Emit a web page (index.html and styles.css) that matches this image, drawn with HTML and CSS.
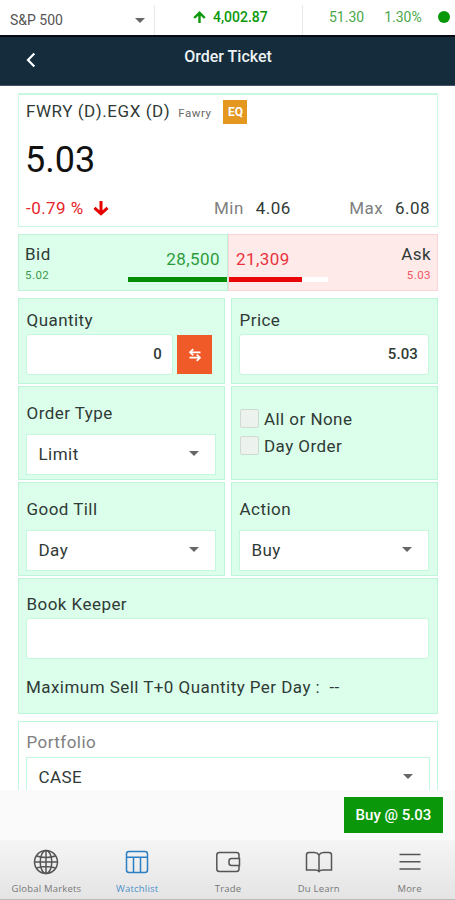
FILE: index.html
```
<!DOCTYPE html>
<html lang="en">
<head>
  <meta charset="UTF-8">
  <meta name="viewport" content="width=device-width, initial-scale=1.0">
  <title>Order Ticket</title>
  <link rel="stylesheet" href="styles.css">
</head>
<body>

  <div class="ticker">
    <div class="ticker-index">
      <span>S&amp;P 500</span>
      <span class="caret"></span>
    </div>
    <div class="ticker-value">
      <svg width="13" height="12" viewBox="0 0 13 12" fill="none" stroke="#0a980a" stroke-width="2.4"><path d="M6.5 12V2M1.2 7l5.3-5.2L11.8 7"/></svg>
      <span>4,002.87</span>
    </div>
    <div class="ticker-change">
      <span>51.30</span>
      <span>1.30%</span>
      <span class="dot"></span>
    </div>
  </div>

  <header>
    <svg class="back" width="10" height="16" viewBox="0 0 10 16" fill="none" stroke="#fff" stroke-width="2.2"><path d="M8.3 1.5L2 8l6.3 6.5"/></svg>
    <h1>Order Ticket</h1>
  </header>

  <main>
    <section class="quote">
      <div class="quote-name">
        <span>FWRY (D).EGX (D)</span>
        <small>Fawry</small>
        <b class="badge">EQ</b>
      </div>
      <div class="quote-price">5.03</div>
      <div class="quote-stats">
        <span class="change">-0.79 %</span>
        <svg width="16" height="15" viewBox="0 0 16 15" fill="none" stroke="#e60000" stroke-width="3"><path d="M8 0v12M1.5 6.8L8 12.8l6.5-6"/></svg>
        <span class="min"><i>Min</i>4.06</span>
        <span class="max"><i>Max</i>6.08</span>
      </div>
    </section>

    <section class="depth">
      <div class="bid">
        <div class="side">Bid<small>5.02</small></div>
        <div class="volume">28,500<div class="bar"></div></div>
      </div>
      <div class="ask">
        <div class="volume">21,309<div class="bar"></div></div>
        <div class="side">Ask<small>5.03</small></div>
      </div>
    </section>

    <div class="form">
      <div class="card card-short">
        <label>Quantity</label>
        <div class="input-row">
          <div class="input">0</div>
          <button class="swap">
            <svg width="14" height="14" viewBox="0 0 14 14" fill="none" stroke="#fff" stroke-width="1.7"><path d="M12.5 4.3H2.5M5.3 1.2L2 4.3l3.3 3.1M1.5 9.7h10M8.7 6.6L12 9.7l-3.3 3.1"/></svg>
          </button>
        </div>
      </div>
      <div class="card card-short">
        <label>Price</label>
        <div class="input">5.03</div>
      </div>

      <div class="card">
        <label>Order Type</label>
        <div class="select"><span>Limit</span><span class="caret"></span></div>
      </div>
      <div class="card checks">
        <div class="check"><span class="box"></span>All or None</div>
        <div class="check"><span class="box"></span>Day Order</div>
      </div>

      <div class="card">
        <label>Good Till</label>
        <div class="select"><span>Day</span><span class="caret"></span></div>
      </div>
      <div class="card">
        <label>Action</label>
        <div class="select"><span>Buy</span><span class="caret"></span></div>
      </div>

      <div class="card keeper">
        <label>Book Keeper</label>
        <div class="input"></div>
        <p>Maximum Sell T+0 Quantity Per Day :&nbsp; --</p>
      </div>
    </div>

    <section class="portfolio">
      <label>Portfolio</label>
      <div class="select"><span>CASE</span><span class="caret"></span></div>
    </section>
  </main>

  <div class="actions">
    <button class="buy-btn">Buy @ 5.03</button>
  </div>

  <nav>
    <a>
      <svg width="26" height="26" viewBox="0 0 26 26"><circle cx="13" cy="13" r="11.5"/><ellipse cx="13" cy="13" rx="5.8" ry="11.5"/><path d="M13 1.5v23M1.5 13h23M3.5 7q9.5 3 19 0M3.5 19q9.5-3 19 0"/></svg>
      Global Markets
    </a>
    <a class="active">
      <svg width="26" height="26" viewBox="0 0 26 26"><rect x="2.5" y="2.5" width="21" height="21" rx="2.5"/><path d="M2.5 8.3h21M9.5 8.3v15M16.5 8.3v15"/></svg>
      Watchlist
    </a>
    <a>
      <svg width="26" height="26" viewBox="0 0 26 26"><path d="M24 9.5V6q0-2.5-2.5-2.5h-17Q1.8 3.5 1.8 6v14q0 2.5 2.7 2.5h17q2.5 0 2.5-2.5V16.5M24.500 9.5h-8q-2.5 0-2.5 2.5v2q0 2.5 2.5 2.5h8z"/></svg>
      Trade
    </a>
    <a>
      <svg width="28" height="26" viewBox="0 0 28 26"><path d="M14 6Q12.5 3.5 9.5 3.5H4Q1.5 3.5 1.5 6v15H10q3 0 4 1.5 1-1.5 4-1.5h8.5V6q0-2.5-2.5-2.5h-5.5Q15.5 3.5 14 6zM14 6v16"/></svg>
      Du Learn
    </a>
    <a>
      <svg width="26" height="26" viewBox="0 0 26 26"><path d="M2.5 5.5h21M2.5 12.8h21M2.5 20h21"/></svg>
      More
    </a>
  </nav>

</body>
</html>
```
FILE: styles.css
```
* {
  box-sizing: border-box;
}

body {
  margin: 0;
  height: 900px;
  overflow: hidden;
  display: flex;
  flex-direction: column;
  font-family: Roboto, sans-serif;
  font-size: 17px;
  line-height: 20px;
  letter-spacing: 0.45px;
  color: #303a36;
  background: #fff;
}

svg {
  display: block;
  flex: none;
}

button {
  border: none;
  padding: 0;
  font-family: inherit;
}

/* top ticker */
.ticker {
  height: 35px;
  flex: none;
  display: flex;
  font-size: 14px;
  letter-spacing: 0;
}

.ticker-index {
  width: 155px;
  margin-top: 5px;
  padding: 5px 9px 0 10px;
  display: flex;
  justify-content: space-between;
  border-right: 1px solid #e8e8e8;
  color: #555;
}

.caret {
  width: 0;
  height: 0;
  border: 5px solid transparent;
  border-top-color: #666;
  border-bottom: none;
}

.ticker-index .caret {
  margin-top: 8px;
}

.ticker-value {
  width: 148px;
  margin-top: 5px;
  padding: 2px 0 0 38px;
  display: flex;
  gap: 7px;
  border-right: 1px solid #e8e8e8;
  color: #0a980a;
  font-weight: 500;
}

.ticker-value svg {
  margin-top: 4px;
}

.ticker-change {
  flex: 1;
  padding: 7px 0 0 26px;
  display: flex;
  gap: 20px;
  color: #4aa84a;
}

.dot {
  width: 12px;
  height: 12px;
  margin: 4px 0 0 -4px;
  border-radius: 50%;
  background: #0a980a;
}

header {
  height: 51px;
  flex: none;
  display: grid;
  grid-template-columns: 60px 1fr 60px;
  background: #142c3c;
  border-top: 2px solid #050b10;
  border-bottom: 1px solid #46536a;
  color: #eef2f4;
}

.back {
  margin: 15px 0 0 26px;
}

h1 {
  margin: 10px 0 0 1px;
  font-size: 16px;
  font-weight: 500;
  letter-spacing: 0;
  text-align: center;
}

main {
  flex: 1;
  min-height: 0;
  overflow: hidden;
  padding: 7px 17px 0 18px;
}

.quote {
  height: 134px;
  padding: 5px 7px 0;
  border: 1px solid #c8f8e0;
  border-top-width: 2px;
}

.quote-name {
  display: flex;
  height: 24px;
  letter-spacing: 0.55px;
}

.quote-name > span {
  margin-top: 1px;
}

small {
  font-size: 11.5px;
}

.quote-name small {
  margin: 3px 12px 0 8px;
  color: #666;
}

.badge {
  width: 24px;
  height: 24px;
  background: #e4981f;
  color: #fff;
  font-size: 12px;
  line-height: 25px;
  letter-spacing: 0;
  text-align: center;
}

.quote-price {
  margin: 16px 0 0 -1px;
  font-size: 36px;
  line-height: 40px;
  letter-spacing: 0;
  color: #111;
}

.quote-stats {
  display: flex;
  align-items: center;
  margin-top: 18px;
}

.quote-stats i {
  margin-right: 12px;
  font-style: normal;
  color: #808080;
}

.change {
  width: 67px;
  color: #e8242c;
}

.min {
  margin-left: 105px;
}

.max {
  margin-left: auto;
}

/* bid / ask */
.depth {
  display: grid;
  grid-template-columns: 1fr 1fr;
  height: 57px;
  margin-top: 7px;
}

.bid,
.ask {
  display: flex;
  justify-content: space-between;
  border: 1px solid #c0f3d9;
  background: #dbffeb;
}

.ask {
  background: #ffeaea;
  border-color: #fcd3d6;
}

.side {
  padding: 9px 6px 0;
}

.side small {
  display: block;
  line-height: 22px;
  color: #3b9a4d;
}

.ask .side {
  text-align: right;
}

.ask small {
  color: #ef5560;
}

.volume {
  width: 99px;
  padding-top: 14px;
}

.bid .volume {
  padding-right: 7px;
  text-align: right;
  color: #2f9a3c;
}

.ask .volume {
  padding-left: 7px;
  color: #e8333c;
}

.bar {
  height: 5px;
  margin: 8px -7px 0 0;
  background: #068c06;
}

.ask .bar {
  margin: 8px 0 0 -7px;
  background: linear-gradient(to right, #ea0508 73px, #fff 73px);
}

/* order form */
.form {
  display: grid;
  grid-template-columns: 1fr 1fr;
  gap: 2px 6px;
  margin-top: 7px;
}

.card {
  height: 94px;
  padding: 16px 8px 0 7px;
  background: #dbffeb;
  border: 1px solid #bdf5da;
}

.card-short {
  height: 86px;
  padding-top: 11px;
}

label {
  display: block;
  padding-left: 0.5px;
}

.input,
.select {
  height: 41px;
  background: #fff;
  border: 1px solid #c3f7de;
}

.input {
  flex: 1;
  margin-top: 4px;
  padding: 9px 10px 0 0;
  border-radius: 3px;
  font-size: 15px;
  font-weight: 500;
  letter-spacing: 0.1px;
  text-align: right;
}

.input-row {
  display: flex;
  gap: 4px;
  padding-right: 4px;
}

.swap {
  width: 35px;
  height: 39px;
  margin-top: 5px;
  display: grid;
  place-items: center;
  background: #f05a28;
}

.select {
  display: flex;
  justify-content: space-between;
  margin-top: 11px;
  padding: 9px 16px 0 11.5px;
}

.select .caret {
  margin-top: 7px;
}

.checks {
  padding-top: 18px;
  padding-left: 8px;
}

.check {
  display: flex;
  align-items: center;
  gap: 5px;
  height: 27px;
}

.box {
  width: 19px;
  height: 19px;
  border: 1px solid #cfdad3;
  border-radius: 2px;
  background: #ecf3ee;
}

.keeper {
  grid-column: 1 / -1;
  height: 136px;
  padding-top: 15px;
}

.keeper p {
  margin: 18px 0 0;
}

.portfolio {
  height: 134px;
  margin-top: 7px;
  padding: 10px 7px 0;
  border: 1px solid #c0f7dc;
}

.portfolio label {
  color: #808080;
}

.portfolio .select {
  margin-top: 5px;
}

/* bottom */
.actions {
  flex: none;
  height: 50px;
  padding: 7px 12px 0 0;
  display: flex;
  justify-content: flex-end;
  background: #fafafa;
}

.buy-btn {
  width: 99px;
  height: 36px;
  background: #0a980a;
  color: #fff;
  font-size: 15px;
  font-weight: 500;
}

nav {
  flex: none;
  height: 60px;
  display: grid;
  grid-template-columns: repeat(5, 1fr);
  padding-left: 1px;
  background: linear-gradient(#f5f5f5, #e4e4e4);
  border-bottom: 1px solid #bbb;
}

nav a {
  display: flex;
  flex-direction: column;
  align-items: center;
  padding-top: 9px;
  gap: 4px;
  font-family: "Open Sans", sans-serif;
  font-size: 9.5px;
  letter-spacing: 0.2px;
  white-space: nowrap;
  color: #777;
}

nav svg {
  fill: none;
  stroke: #555;
  stroke-width: 1.5;
}

nav .active {
  color: #4c90cb;
}

nav .active svg {
  stroke: #2b7fc4;
}
```
